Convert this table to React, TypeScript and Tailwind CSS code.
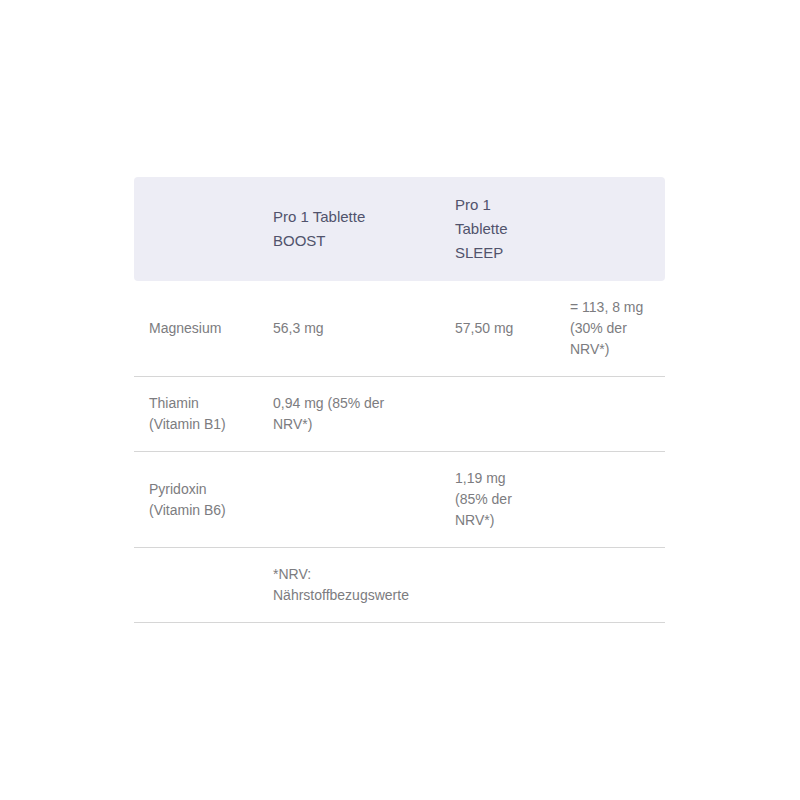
import React from 'react';

type Row = {
  label: string[];
  boost?: string;
  sleep?: string;
  extra?: string;
};

const rows: Row[] = [
  { label: ['Magnesium'], boost: '56,3 mg', sleep: '57,50 mg', extra: '= 113, 8 mg (30% der NRV*)' },
  { label: ['Thiamin', '(Vitamin B1)'], boost: '0,94 mg (85% der NRV*)' },
  { label: ['Pyridoxin', '(Vitamin B6)'], sleep: '1,19 mg (85% der NRV*)' },
  { label: [], boost: '*NRV: Nährstoffbezugswerte' },
];

const cols = 'grid grid-cols-[124px_182px_115px_110px]';

function App() {
  return (
    <div
      className="min-h-[800px] bg-white px-[134px] pt-[177px]"
      style={{ fontFamily: '"Liberation Sans", Arial, sans-serif' }}
    >
      <div className="w-[531px]">
        {/* header */}
        <div className={`${cols} items-center rounded bg-[#ededf5] py-4 text-[15px] leading-6 text-[#51536c]`}>
          <div className="pl-[15px]" />
          <div className="pl-[15px] pr-5">Pro 1 Tablette BOOST</div>
          <div className="pl-[15px] pr-5">Pro 1 Tablette SLEEP</div>
          <div className="pl-[15px]" />
        </div>

        {rows.map((row, i) => (
          <div
            key={i}
            className={`${cols} items-center border-b border-[#d6d6d6] py-4 text-sm leading-[21px] text-[#7c7c80]`}
          >
            <div className="pl-[15px] pr-3">
              {row.label.map((l) => (
                <div key={l}>{l}</div>
              ))}
            </div>
            <div className="pl-[15px] pr-5">{row.boost}</div>
            <div className="pl-[15px] pr-5">{row.sleep}</div>
            <div className="pl-[15px] pr-[15px]">{row.extra}</div>
          </div>
        ))}
      </div>
    </div>
  );
}

export default App;
